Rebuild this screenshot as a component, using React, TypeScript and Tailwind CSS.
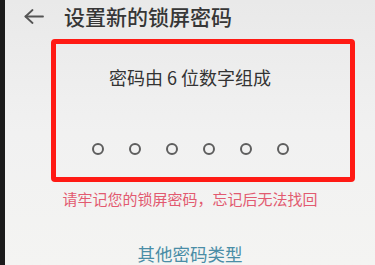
import React from "react";

export default function App() {
  const font = { fontFamily: '"Noto Sans CJK SC", "Noto Sans", sans-serif' };
  return (
    <div className="w-[375px] h-[265px] overflow-hidden flex" style={font}>
      <div className="w-[5px] h-full bg-[#1b1b1b]" />
      <div className="relative flex-1 h-full flex flex-col bg-gradient-to-b from-[#e9e9e9] via-[#f1f1f1] to-[#f4f4f2]">
        <div className="h-[32px] flex items-center pl-[19px]">
          <svg width="20" height="15" viewBox="0 0 20 15" fill="none" stroke="#555" strokeWidth="1.8" strokeLinecap="round" strokeLinejoin="round">
            <path d="M1.5 7.5H19" />
            <path d="M8.5 1L1.5 7.5L8.5 14" />
          </svg>
          <span className="ml-[20px] text-[21px] leading-[21px] font-medium text-[#363636]">设置新的锁屏密码</span>
        </div>
        <div className="flex flex-col items-center">
          <div className="mt-[36px] text-[18px] leading-[18px] text-[#333]">密码由 6 位数字组成</div>
          <div className="mt-[57px] flex gap-[25px]">
            {[0, 1, 2, 3, 4, 5].map((i) => (
              <div key={i} className="w-[12px] h-[12px] rounded-full border-2 border-[#5e5e5e]" />
            ))}
          </div>
          <div className="mt-[36px] text-[15px] leading-[15px] text-[#e25a70]">请牢记您的锁屏密码，忘记后无法找回</div>
          <div className="mt-[39px] text-[17.5px] leading-[18px] text-[#4a8da6]">其他密码类型</div>
        </div>
        <div className="absolute left-[46px] top-[39px] w-[304px] h-[143px] border-[5px] border-[#ff1a14] rounded-[4px]" />
      </div>
    </div>
  );
}
